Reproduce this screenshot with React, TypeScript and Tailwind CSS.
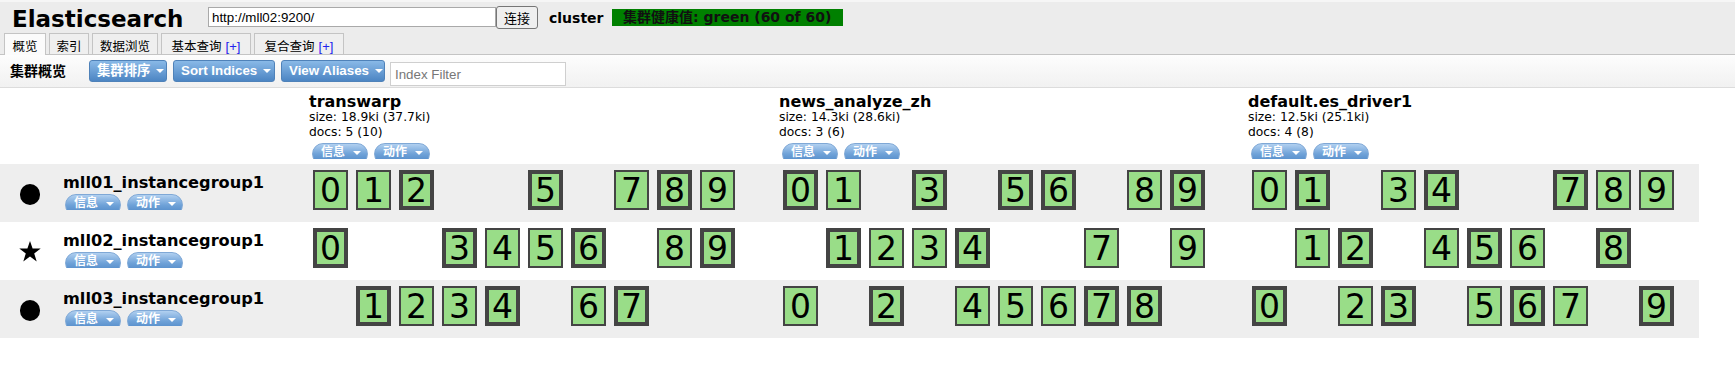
const sans = "font-['DejaVu_Sans','Noto_Sans_CJK_SC',sans-serif]";

interface IndexInfo {
  name: string;
  size: string;
  docs: string;
  width: string;
}

const indices: IndexInfo[] = [
  { name: "transwarp", size: "18.9ki (37.7ki)", docs: "5 (10)", width: "w-[470px]" },
  { name: "news_analyze_zh", size: "14.3ki (28.6ki)", docs: "3 (6)", width: "w-[469px]" },
  { name: "default.es_driver1", size: "12.5ki (25.1ki)", docs: "4 (8)", width: "w-[451px]" },
];

// one string per index, ten slots: p = primary, r = replica, . = empty
const nodes = [
  { name: "mll01_instancegroup1", master: false, shards: ["rrp..p.rpr", "pr.p.pp.rp", "rp.rp..prr"] },
  { name: "mll02_instancegroup1", master: true, shards: ["p..prrp.rp", ".prrp..r.r", ".rp.rpr.p."] },
  { name: "mll03_instancegroup1", master: false, shards: [".prrp.rp..", "r.p.rrrpp.", "p.rp.rpr.p"] },
];

const tabs = [
  { label: "概览", w: "w-[42px]", active: true },
  { label: "索引", w: "w-[40px]" },
  { label: "数据浏览", w: "w-[66px]" },
  { label: "基本查询", w: "w-[90px]", plus: true },
  { label: "复合查询", w: "w-[90px]", plus: true },
];

function Caret() {
  return <span className="h-0 w-0 border-x-[4px] border-t-[4px] border-x-transparent border-t-white" />;
}

function Pill({ label }: { label: string }) {
  return (
    <div className="h-[16px] w-[56px] overflow-hidden">
      <div className="flex h-[22px] items-start whitespace-nowrap rounded-[11px] border border-[#7fa8d6] bg-gradient-to-b from-[#b1d0f0] via-[#6fa2d8] to-[#4a84c4] pl-[8px] pt-[1px] text-[12px] font-bold leading-[15px] text-white">
        <span>{label}</span>
        <span className="ml-[8px] mt-[6px] flex">
          <Caret />
        </span>
      </div>
    </div>
  );
}

function ToolButton({ label, width }: { label: string; width: string }) {
  return (
    <button
      className={`${width} mt-[5px] flex h-[22px] shrink-0 items-center whitespace-nowrap rounded-[3px] border border-[#4f82b9] bg-gradient-to-b from-[#89b9e7] to-[#4c85c3] pl-[7px] font-['Liberation_Sans','Noto_Sans_CJK_SC',sans-serif] text-[13.33px] font-bold text-white`}
    >
      <span>{label}</span>
      <span className="ml-[6px] flex">
        <Caret />
      </span>
    </button>
  );
}

function Shard({ n, kind }: { n: number; kind: string }) {
  if (kind === ".") return <div className="h-[40px] w-[35px]" />;
  return (
    <div
      className={`flex h-[40px] w-[35px] items-center justify-center border-[#444444] bg-[#99dd88] text-[33px] leading-none ${
        kind === "p" ? "border-4" : "border-2"
      }`}
    >
      {n}
    </div>
  );
}

function Star() {
  return (
    <svg width="22" height="21" viewBox="0 0 22 21">
      <polygon points="11,0 13.6,7.6 21.7,7.6 15.2,12.4 17.7,20.5 11,15.6 4.3,20.5 6.8,12.4 0.3,7.6 8.4,7.6" fill="#000" />
    </svg>
  );
}

export default function App() {
  return (
    <div className={`h-[365px] w-[1735px] overflow-hidden bg-white text-black ${sans}`}>
      <div className="border-t-[2px] border-[#f6f6f6] bg-[#ececec]">
        <div className="flex h-[31px] items-start">
          <h1 className="w-[208px] pl-[12px] pt-[3px] text-[23px] font-bold leading-[28px]">Elasticsearch</h1>
          <input
            readOnly
            defaultValue="http://mll02:9200/"
            className="mt-[5px] h-[20px] w-[288px] border border-[#a9a9a9] bg-white px-[3px] font-['Liberation_Sans',sans-serif] text-[13.33px] outline-none"
          />
          <button className="mt-[4px] h-[23px] w-[42px] rounded-[3px] border border-[#767676] bg-[#efefef] font-['Noto_Sans_CJK_SC',sans-serif] text-[13px]">
            连接
          </button>
          <span className="ml-[11px] mt-[8px] w-[63px] text-[14px] font-bold leading-[17px]">cluster</span>
          <div className="mt-[7px] h-[17px] w-[231px] bg-[#008000] pl-[11px] text-[14px] font-bold leading-[17px] text-[#111]">
            集群健康值: green (60 of 60)
          </div>
        </div>
        <div className="flex h-[21px] items-end gap-[3px] pl-[4px]">
          {tabs.map((t) => (
            <div
              key={t.label}
              className={`${t.w} flex justify-center whitespace-nowrap border border-b-0 border-[#c4c4c4] pt-[6px] text-[12.5px] leading-[14px] ${
                t.active ? "relative z-10 -mb-px h-[22px] bg-[#fbfbfb]" : "h-[21px] bg-[#efefef]"
              }`}
            >
              <span>{t.label}</span>
              {t.plus && <span className="ml-[4px] font-['Liberation_Sans',sans-serif] text-[13px] text-[#2222ee]">[+]</span>}
            </div>
          ))}
        </div>
      </div>

      <div className="flex h-[34px] items-start border-y border-t-[#c4c4c4] border-b-[#dcdcdc] bg-gradient-to-b from-[#fdfdfd] to-[#f1f1f1]">
        <span className="w-[89px] pl-[10px] pt-[8px] text-[14px] font-bold leading-[17px]">集群概览</span>
        <ToolButton label="集群排序" width="w-[78px]" />
        <span className="w-[6px] shrink-0" />
        <ToolButton label="Sort Indices" width="w-[102px]" />
        <span className="w-[6px] shrink-0" />
        <ToolButton label="View Aliases" width="w-[104px]" />
        <input
          placeholder="Index Filter"
          className="ml-[5px] mt-[7px] h-[24px] w-[176px] border border-[#cfcfcf] bg-white px-[4px] font-['Liberation_Sans',sans-serif] text-[13.33px] outline-none placeholder:text-[#777]"
        />
      </div>

      <div className="w-[1699px]">
        <div className="flex h-[76px]">
          <div className="w-[309px]" />
          {indices.map((ix) => (
            <div key={ix.name} className={`${ix.width} pt-[5px]`}>
              <div className="text-[16px] font-bold leading-[17px]">{ix.name}</div>
              <div className="text-[12.3px] leading-[15px]">size: {ix.size}</div>
              <div className="text-[12.3px] leading-[15px]">docs: {ix.docs}</div>
              <div className="ml-[3px] mt-[3px] flex gap-[6px]">
                <Pill label="信息" />
                <Pill label="动作" />
              </div>
            </div>
          ))}
        </div>

        {nodes.map((node, i) => (
          <div key={node.name} className={`flex h-[58px] ${i % 2 === 0 ? "bg-[#eeeeee]" : "bg-white"}`}>
            <div className="flex w-[309px]">
              <div className="w-[63px] pl-[19px] pt-[19px]">
                {node.master ? <Star /> : <div className="ml-[1px] mt-[1px] h-[21px] w-[20px] rounded-full bg-black" />}
              </div>
              <div className="pt-[10px]">
                <div className="text-[16.2px] font-bold leading-[17px]">{node.name}</div>
                <div className="ml-[2px] mt-[3px] flex gap-[6px]">
                  <Pill label="信息" />
                  <Pill label="动作" />
                </div>
              </div>
            </div>
            {indices.map((ix, j) => (
              <div key={ix.name} className={`${ix.width} flex gap-[8px] pl-[4px] pt-[6px]`}>
                {node.shards[j].split("").map((k, n) => (
                  <Shard key={n} n={n} kind={k} />
                ))}
              </div>
            ))}
          </div>
        ))}
      </div>
    </div>
  );
}
